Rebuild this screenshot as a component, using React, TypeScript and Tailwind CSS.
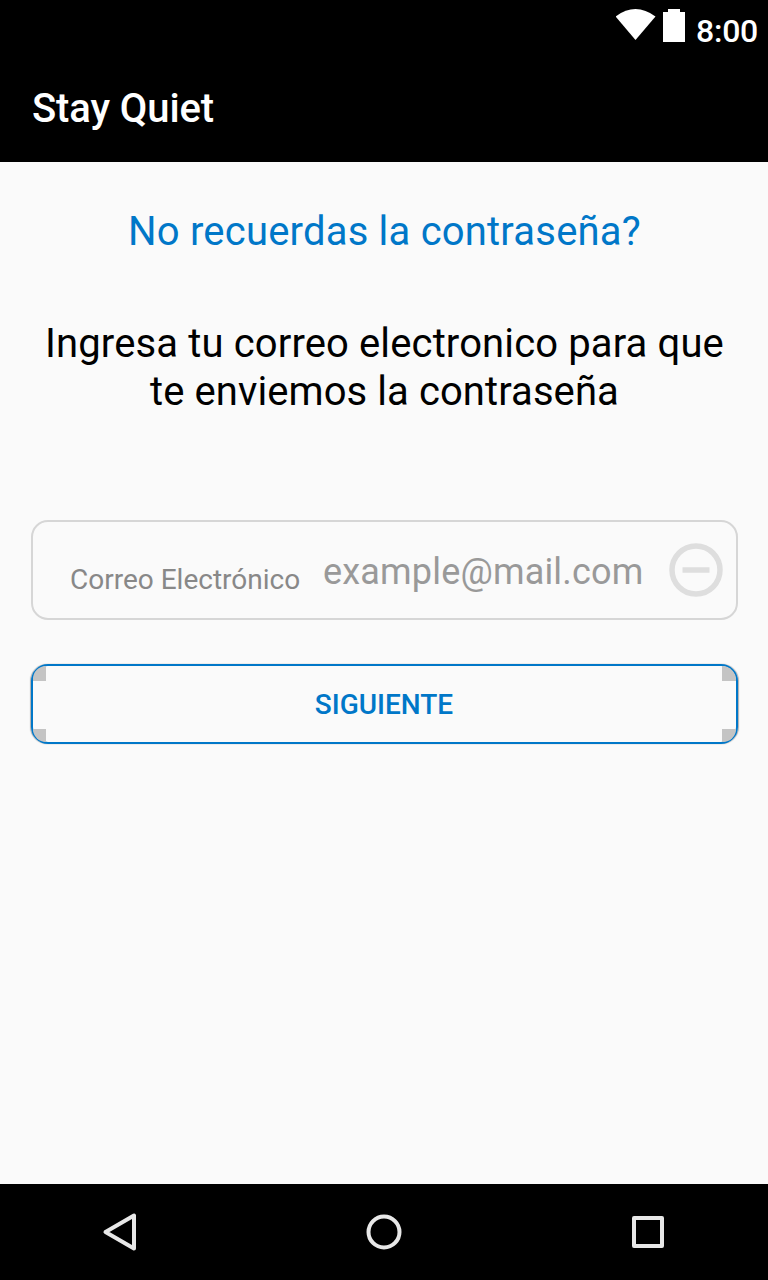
export default function App() {
  return (
    <div className="flex h-[1280px] w-[768px] flex-col bg-[#fafafa] font-['Roboto',sans-serif]">
      <header className="h-[162px] bg-black text-white">
        <div className="flex h-[50px] justify-end pr-[10px]">
          <svg className="mt-[9px] h-8 w-10" viewBox="0 0 40 32" fill="white"><path d="M-0.500 7.500Q19.500-7.500 39.500 7.500L19.500 31Z" /></svg>
          <svg className="ml-[7px] mt-[9px] h-[33px] w-[22px]" viewBox="0 0 22 33" fill="white"><path d="M0 3H5V0H17V3H22V33H0Z" /></svg>
          <span className="ml-[11px] mt-[11px] text-[32px] font-medium leading-[40px] tracking-[-0.25px]">8:00</span>
        </div>
        <h1 className="pl-8 pt-[35px] text-[40px] font-medium leading-[48px] tracking-[-0.1px]">Stay Quiet</h1>
      </header>
      <main className="flex-1 text-[40px] leading-[48px]">
        <h2 className="pl-px pt-[46px] text-center tracking-[0.2px] text-[#0077c8]">No recuerdas la contraseña?</h2>
        <p className="mt-16 pl-px text-center tracking-[0.13px] text-black">Ingresa tu correo electronico para que<br /><span className="tracking-[0.08px]">te enviemos la contraseña</span></p>
        <div className="ml-[30.5px] mt-[104px] flex h-[100px] w-[707.5px] rounded-[17px] border-2 border-[#d6d6d6] pl-[37.5px]">
          <label className="mt-[41px] w-[253px] text-[28px] leading-[34px] text-[#888]">Correo Electrónico</label>
          <span className="mt-[28px] w-[346px] text-[36px] leading-[44px] tracking-[0.18px] text-[#999]">example@mail.com</span>
          <svg className="mt-[21px] h-[54px] w-[54px] shrink-0" viewBox="0 0 54 54" fill="none" stroke="#dedede" strokeWidth="5.500"><circle cx="27" cy="27" r="24" /><path d="M13.500 27H40.500" /></svg>
        </div>
        <button className="relative ml-[31px] mt-[44px] block h-20 w-[707px] rounded-[17px] border-2 border-[#0077c8] pr-px pt-[2px] text-[28px] font-medium text-[#0077c8] shadow-[1px_0_1px_rgba(0,0,0,0.3),-1px_0_1px_rgba(0,0,0,0.3)]">
          <span className="absolute left-0 top-0 h-[15px] w-[13px] rounded-tl-[15px] bg-[#c4c4c4]" />
          <span className="absolute right-0 top-0 h-[15px] w-[14px] rounded-tr-[15px] bg-[#c4c4c4]" />
          <span className="absolute bottom-0 left-0 h-[13px] w-[13px] rounded-bl-[15px] bg-[#c4c4c4]" />
          <span className="absolute bottom-0 right-0 h-[13px] w-[14px] rounded-br-[15px] bg-[#c4c4c4]" />
          SIGUIENTE
        </button>
      </main>
      <nav className="flex h-24 items-center justify-between bg-black px-24">
        <svg className="h-12 w-12" viewBox="0 0 48 48" fill="none" stroke="#e8e8e8" strokeWidth="4" strokeLinejoin="round"><path d="M9.500 24L38 7.500V40.500Z" /></svg>
        <svg className="h-12 w-12" viewBox="0 0 48 48" fill="none" stroke="#e8e8e8" strokeWidth="4"><circle cx="24" cy="24" r="15.500" /></svg>
        <svg className="h-12 w-12" viewBox="0 0 48 48" fill="none" stroke="#e8e8e8" strokeWidth="4" strokeLinejoin="round"><rect x="10" y="10" width="28" height="28" /></svg>
      </nav>
    </div>
  );
}
